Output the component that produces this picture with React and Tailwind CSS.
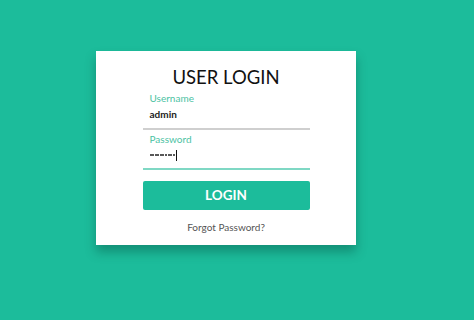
import React from "react";

export default function App() {
  return (
    <div
      className="w-[474px] h-[320px] bg-[#1cbc9b] pt-[51px] pl-[96px]"
      style={{ fontFamily: "Lato, 'Noto Sans', sans-serif" }}
    >
      <div className="w-[260px] h-[194px] bg-white flex flex-col items-center pt-[13px] shadow-[0_7px_10px_rgba(0,60,50,0.35)]">
        <h1 className="text-[18.5px] leading-[26px] text-[#111] font-normal">USER LOGIN</h1>
        <div className="w-[167px] mt-[1px]">
          <div className="border-b-2 border-[#cfcfcf] pl-[7px] pb-[7px]">
            <div className="text-[10px] leading-[14px] text-[#4cc2a3]">Username</div>
            <div className="text-[10px] leading-[14px] mt-[2px] font-bold text-[#222]">admin</div>
          </div>
          <div className="border-b-2 border-[#7fd8c4] pl-[7px] pb-[6px] mt-[2px]">
            <div className="text-[10px] leading-[14px] text-[#4cc2a3]">Password</div>
            <div className="h-[14px] mt-[2px] flex items-center">
              <div className="flex items-center gap-[0.6px]">
                {Array.from({ length: 10 }).map((_, i) => (
                  <div key={i} className="w-[2px] h-[2px] rounded-full bg-[#222]" />
                ))}
              </div>
              <div className="w-[1px] h-[11px] bg-[#111] ml-[1px]" />
            </div>
          </div>
          <button className="mt-[11px] w-full h-[29px] rounded-[2px] bg-[#1cbc9b] text-white font-bold text-[13.5px] flex items-center justify-center">
            LOGIN
          </button>
          <div className="mt-[10px] text-[10px] leading-[14px] text-[#555] text-center">Forgot Password?</div>
        </div>
      </div>
    </div>
  );
}
